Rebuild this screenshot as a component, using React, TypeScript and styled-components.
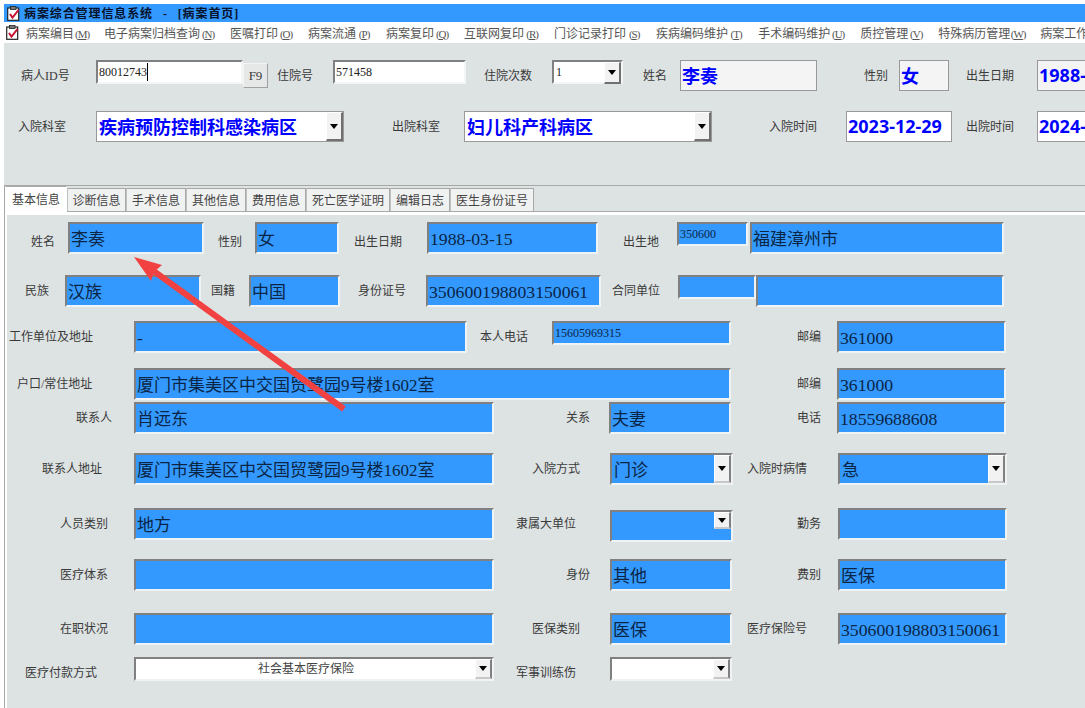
import React from 'react';
import styled, { createGlobalStyle } from 'styled-components';

const CJK = '"Liberation Serif", "Noto Sans CJK SC", serif';

const GlobalStyle = createGlobalStyle`
  html, body {
    margin: 0;
    padding: 0;
    width: 1085px;
    height: 708px;
    overflow: hidden;
    background: #fff;
  }
  * { box-sizing: border-box; }
`;

const ClipboardIcon = () => (
  <IconBox width="13" height="15" viewBox="0 0 13 15">
    <rect x="0.7" y="2" width="11" height="12.3" fill="#fff" stroke="#222" strokeWidth="1.2" />
    <rect x="3.5" y="0.5" width="5.5" height="3" fill="#777" stroke="#222" strokeWidth="0.8" />
    <path d="M3 8 L5.5 11.5 L11.5 4" fill="none" stroke="#c8102e" strokeWidth="2" />
  </IconBox>
);

const Menu = ({ name, hot }: { name: string; hot: string }) => (
  <MenuItem>
    {name}
    <HotKey>
      (<u>{hot}</u>)
    </HotKey>
  </MenuItem>
);

const DropDown = ({ $short, $blue }: { $short?: boolean; $blue?: boolean }) => (
  <DropButton $short={$short} $blue={$blue}>
    <Caret />
  </DropButton>
);

export default function App() {
  return (
    <Page>
      <GlobalStyle />
      <TitleBar>
        <ClipboardIcon />
        <TitleText>病案综合管理信息系统 - [病案首页]</TitleText>
      </TitleBar>
      <MenuBar>
        <ClipboardIcon />
        <Menu name="病案编目" hot="M" />
        <Menu name="电子病案归档查询" hot="N" />
        <Menu name="医嘱打印" hot="O" />
        <Menu name="病案流通" hot="P" />
        <Menu name="病案复印" hot="Q" />
        <Menu name="互联网复印" hot="R" />
        <Menu name="门诊记录打印" hot="S" />
        <Menu name="疾病编码维护" hot="T" />
        <Menu name="手术编码维护" hot="U" />
        <Menu name="质控管理" hot="V" />
        <Menu name="特殊病历管理" hot="W" />
        <Menu name="病案工作" hot="X" />
      </MenuBar>

      <Header>
        <Row $h={51}>
          <Label $gap={17} $w={50}>病人ID号</Label>
          <Input $gap={25} $w={147}>80012743<TextCaret /></Input>
          <KeyButton>F9</KeyButton>
          <Label $gap={9} $w={36}>住院号</Label>
          <Input $gap={20} $w={133}>571458</Input>
          <Label $gap={18} $w={48}>住院次数</Label>
          <Input $gap={20} $w={71}>
            <Grow>1</Grow>
            <DropDown />
          </Input>
          <Label $gap={20} $w={24}>姓名</Label>
          <ReadBox $gap={13} $w={137}>李奏</ReadBox>
          <Label $gap={47} $w={24}>性别</Label>
          <ReadBox $gap={11} $w={50}>女</ReadBox>
          <Label $gap={17} $w={48}>出生日期</Label>
          <ReadBox $gap={23} $w={100}>1988-03-15</ReadBox>
        </Row>
        <Row $h={51}>
          <Label $gap={14} $w={48}>入院科室</Label>
          <ReadBox $gap={30} $w={248} $white>
            <Grow>疾病预防控制科感染病区</Grow>
            <DropDown />
          </ReadBox>
          <Label $gap={48} $w={48}>出院科室</Label>
          <ReadBox $gap={24} $w={248} $white>
            <Grow>妇儿科产科病区</Grow>
            <DropDown />
          </ReadBox>
          <Label $gap={57} $w={48}>入院时间</Label>
          <ReadBox $gap={29} $w={106} $white>2023-12-29</ReadBox>
          <Label $gap={14} $w={48}>出院时间</Label>
          <ReadBox $gap={23} $w={100} $white>2024-</ReadBox>
        </Row>
      </Header>

      <TabStrip>
        <Tab $active $w={62}>基本信息</Tab>
        <Tab $w={59}>诊断信息</Tab>
        <Tab $w={60}>手术信息</Tab>
        <Tab $w={60}>其他信息</Tab>
        <Tab $w={60}>费用信息</Tab>
        <Tab $w={84}>死亡医学证明</Tab>
        <Tab $w={60}>编辑日志</Tab>
        <Tab $w={84}>医生身份证号</Tab>
      </TabStrip>

      <Panel>
        <Row $h={53}>
          <Label $gap={24} $w={24} $dy={4}>姓名</Label>
          <Field $gap={13} $w={136}>李奏</Field>
          <Label $gap={14} $w={24} $dy={4}>性别</Label>
          <Field $gap={13} $w={84}>女</Field>
          <Label $gap={15} $w={48} $dy={4}>出生日期</Label>
          <Field $gap={25} $w={171} $num>1988-03-15</Field>
          <Label $gap={25} $w={36} $dy={4}>出生地</Label>
          <Field $gap={18} $w={71} $small>350600</Field>
          <Field $gap={2} $w={254}>福建漳州市</Field>
        </Row>
        <Row $h={46}>
          <Label $gap={18} $w={24}>民族</Label>
          <Field $gap={16} $w={136}>汉族</Field>
          <Label $gap={10} $w={24}>国籍</Label>
          <Field $gap={14} $w={91}>中国</Field>
          <Label $gap={18} $w={48}>身份证号</Label>
          <Field $gap={20} $w={175} $num>350600198803150061</Field>
          <Label $gap={11} $w={48}>合同单位</Label>
          <Field $gap={18} $w={78} $small />
          <Field $gap={0} $w={248} />
        </Row>
        <Row $h={47}>
          <Label $gap={2} $w={84}>工作单位及地址</Label>
          <Field $gap={41} $w={333}>-</Field>
          <Label $gap={13} $w={48}>本人电话</Label>
          <Field $gap={24} $w={179} $small>15605969315</Field>
          <Label $gap={66} $w={24}>邮编</Label>
          <Field $gap={16} $w={169} $num>361000</Field>
        </Row>
        <Row $h={34}>
          <Label $gap={10} $w={77}>户口/常住地址</Label>
          <Field $gap={40} $w={597}>厦门市集美区中交国贸鹭园9号楼1602室</Field>
          <Label $gap={66} $w={24}>邮编</Label>
          <Field $gap={16} $w={169} $num>361000</Field>
        </Row>
        <Row $h={51}>
          <Label $gap={69} $w={36}>联系人</Label>
          <Field $gap={22} $w={360}>肖远东</Field>
          <Label $gap={72} $w={24}>关系</Label>
          <Field $gap={19} $w={122}>夫妻</Field>
          <Label $gap={66} $w={24}>电话</Label>
          <Field $gap={16} $w={169} $num>18559688608</Field>
        </Row>
        <Row $h={55}>
          <Label $gap={35} $w={60}>联系人地址</Label>
          <Field $gap={32} $w={360}>厦门市集美区中交国贸鹭园9号楼1602室</Field>
          <Label $gap={38} $w={48}>入院方式</Label>
          <Field $gap={30} $w={123}>
            <Grow>门诊</Grow>
            <DropDown $blue />
          </Field>
          <Label $gap={14} $w={60}>入院时病情</Label>
          <Field $gap={31} $w={169}>
            <Grow>急</Grow>
            <DropDown $blue />
          </Field>
        </Row>
        <Row $h={51}>
          <Label $gap={53} $w={48}>人员类别</Label>
          <Field $gap={26} $w={360}>地方</Field>
          <Label $gap={22} $w={60}>隶属大单位</Label>
          <Field $gap={34} $w={123} $dy={2}>
            <Grow />
            <DropDown $short $blue />
          </Field>
          <Label $gap={64} $w={24}>勤务</Label>
          <Field $gap={17} $w={169} />
        </Row>
        <Row $h={54}>
          <Label $gap={53} $w={48}>医疗体系</Label>
          <Field $gap={26} $w={360} />
          <Label $gap={72} $w={24}>身份</Label>
          <Field $gap={20} $w={122}>其他</Field>
          <Label $gap={65} $w={24}>费别</Label>
          <Field $gap={17} $w={169}>医保</Field>
        </Row>
        <Row $h={44}>
          <Label $gap={53} $w={48}>在职状况</Label>
          <Field $gap={26} $w={360} />
          <Label $gap={38} $w={48}>医保类别</Label>
          <Field $gap={30} $w={122}>医保</Field>
          <Label $gap={15} $w={60}>医疗保险号</Label>
          <Field $gap={31} $w={169} $num>350600198803150061</Field>
        </Row>
        <Row $h={40}>
          <Label $gap={18} $w={72}>医疗付款方式</Label>
          <Field $gap={37} $w={360} $small $white>
            <CenterText>社会基本医疗保险</CenterText>
            <DropDown $blue />
          </Field>
          <Label $gap={22} $w={60}>军事训练伤</Label>
          <Field $gap={34} $w={122} $small $white>
            <Grow />
            <DropDown $blue />
          </Field>
        </Row>
      </Panel>

      <ArrowOverlay width="1085" height="708" viewBox="0 0 1085 708">
        <path d="M134 257 L162 265 L156.8 269.6 L345.8 406.6 L342.2 411.4 L153.2 274.4 L151 281 Z" fill="#f24141" />
      </ArrowOverlay>
    </Page>
  );
}

const Page = styled.div`
  position: relative;
  width: 1085px;
  height: 708px;
  padding-top: 4px;
  overflow: hidden;
  font-family: ${CJK};
  font-size: 12px;
  color: #3a3a3a;
`;

const IconBox = styled.svg`
  flex: none;
`;

const TitleBar = styled.div`
  height: 18px;
  margin-left: 4px;
  padding-left: 3px;
  display: flex;
  align-items: center;
  background: #3399ff;
`;

const TitleText = styled.div`
  margin-left: 4px;
  font-weight: 700;
  font-size: 12px;
  letter-spacing: 0.9px;
  word-spacing: 6px;
  color: #06122a;
  white-space: pre;
`;

const MenuBar = styled.div`
  height: 21px;
  padding-left: 6px;
  display: flex;
  align-items: center;
  gap: 14px;
  background: #fff;
  white-space: nowrap;
  overflow: hidden;
  & > svg {
    margin-right: -7px;
  }
`;

const MenuItem = styled.span`
  flex: none;
  color: #555;
  font-size: 12px;
`;

const HotKey = styled.span`
  display: inline-block;
  width: 16px;
  font-size: 11px;
  letter-spacing: -1px;
  text-align: center;
`;

const Header = styled.div`
  height: 143px;
  margin-left: 4px;
  padding-top: 17px;
  background: #dde2e2;
  border-bottom: 1px solid #a8a8a8;
`;

const Row = styled.div<{ $h: number }>`
  height: ${p => p.$h}px;
  display: flex;
  align-items: flex-start;
`;

const Label = styled.div<{ $gap: number; $w: number; $dy?: number }>`
  flex: none;
  width: ${p => p.$w}px;
  height: 32px;
  margin-left: ${p => p.$gap}px;
  margin-top: ${p => p.$dy || 0}px;
  line-height: 32px;
  white-space: nowrap;
  color: #3a3a3a;
`;

const Input = styled.div<{ $gap: number; $w: number }>`
  flex: none;
  display: flex;
  align-items: center;
  width: ${p => p.$w}px;
  height: 24px;
  margin-left: ${p => p.$gap}px;
  padding-left: 1px;
  background: #fff;
  border: 2px solid #808080;
  border-right-color: #f4f6f6;
  border-bottom-color: #f4f6f6;
  font-size: 12px;
  color: #222;
`;

const TextCaret = styled.span`
  display: inline-block;
  width: 1px;
  height: 18px;
  background: #000;
`;

const KeyButton = styled.div`
  flex: none;
  width: 25px;
  height: 25px;
  margin-top: 3px;
  display: flex;
  align-items: center;
  justify-content: center;
  background: #e6e8e8;
  border: 1px solid #a0a0a0;
  border-top-color: #f4f4f4;
  border-left-color: #f4f4f4;
  font-size: 13px;
`;

const ReadBox = styled.div<{ $gap: number; $w: number; $white?: boolean }>`
  flex: none;
  display: flex;
  align-items: center;
  width: ${p => p.$w}px;
  height: 31px;
  margin-left: ${p => p.$gap}px;
  padding: 0 0 2px 1px;
  background: ${p => (p.$white ? '#fff' : '#f4f4f4')};
  border: 1px solid #999;
  font-family: "Noto Sans", "Noto Sans CJK SC", sans-serif;
  font-weight: 700;
  font-size: 18px;
  color: #0000ff;
  white-space: nowrap;
`;

const Grow = styled.div`
  flex: 1;
  min-width: 0;
  padding-left: 1px;
`;

const CenterText = styled.div`
  flex: 1;
  text-align: center;
`;

const DropButton = styled.div<{ $short?: boolean; $blue?: boolean }>`
  flex: none;
  align-self: ${p => (p.$short ? 'flex-start' : 'stretch')};
  width: 17px;
  height: ${p => (p.$short ? '17px' : 'auto')};
  margin-bottom: ${p => (p.$blue ? 0 : -2)}px;
  display: flex;
  align-items: center;
  justify-content: center;
  background: #f2f2f2;
  border: 1px solid #fff;
  border-right: 2px solid ${p => (p.$blue ? '#808080' : '#707070')};
  border-bottom: 2px solid ${p => (p.$blue ? '#c8c8c8' : '#707070')};
`;

const Caret = styled.span`
  width: 0;
  height: 0;
  border-left: 4px solid transparent;
  border-right: 4px solid transparent;
  border-top: 5px solid #000;
`;

const TabStrip = styled.div`
  height: 29px;
  margin-left: 4px;
  display: flex;
  align-items: flex-start;
  background: #dde2e2;
  background-image: linear-gradient(#a8a8a8, #a8a8a8), linear-gradient(#fff, #fff);
  background-repeat: no-repeat;
  background-size: 100% 1px, 100% 3px;
  background-position: 0 25px, 0 26px;
  border-left: 1px solid #a8a8a8;
`;

const Tab = styled.div<{ $active?: boolean; $w: number }>`
  flex: none;
  width: ${p => p.$w}px;
  height: ${p => (p.$active ? 28 : 23)}px;
  margin-top: ${p => (p.$active ? 0 : 2)}px;
  padding-top: ${p => (p.$active ? 4 : 3)}px;
  text-align: center;
  line-height: 18px;
  background: ${p => (p.$active ? '#fff' : '#f0f1f1')};
  border: 1px solid #a8a8a8;
  border-bottom: none;
  border-left-color: ${p => (p.$active ? '#fff' : '#c0c0c0')};
  border-right-color: ${p => (p.$active ? '#fff' : '#a8a8a8')};
  color: #444;
  white-space: nowrap;
`;

const Panel = styled.div`
  height: 493px;
  margin-left: 4px;
  padding: 7px 0 0 2px;
  background: #dde2e2;
  border-left: 1px solid #a8a8a8;
  box-shadow: inset 2px 0 0 #fff;
`;

const Field = styled.div<{ $gap: number; $w: number; $small?: boolean; $white?: boolean; $dy?: number; $num?: boolean }>`
  flex: none;
  display: flex;
  width: ${p => p.$w}px;
  height: ${p => (p.$small ? 24 : 32)}px;
  margin-left: ${p => p.$gap}px;
  margin-top: ${p => p.$dy || 0}px;
  padding-left: 1px;
  background: ${p => (p.$white ? '#fff' : '#3399ff')};
  border: 2px solid #808080;
  border-right-color: #f0f3f3;
  border-bottom-color: #f0f3f3;
  font-size: ${p => (p.$small ? 12 : p.$num ? 17.7 : 17)}px;
  line-height: ${p => (p.$small ? 21 : 31)}px;
  color: ${p => (p.$white ? '#444' : '#0b2545')};
  white-space: nowrap;
  overflow: hidden;
`;

const ArrowOverlay = styled.svg`
  position: absolute;
  left: 0;
  top: 0;
  pointer-events: none;
`;
